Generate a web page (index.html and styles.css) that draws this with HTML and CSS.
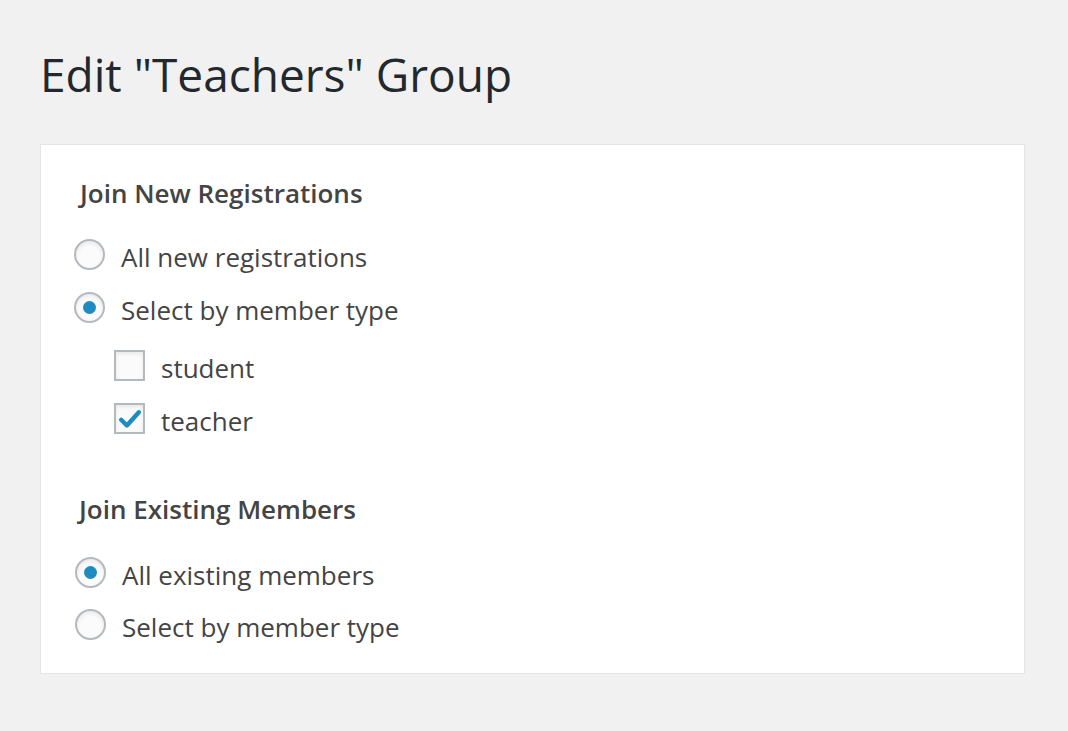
FILE: index.html
```html
<!DOCTYPE html>
<html lang="en">
<head>
<meta charset="utf-8">
<title>Edit "Teachers" Group</title>
<link rel="stylesheet" href="styles.css">
</head>
<body>
<div class="wrap">
  <h1 class="page-title">Edit "Teachers" Group</h1>
  <div class="card">
    <section class="section">
      <h2 class="section-title">Join New Registrations</h2>
      <div class="options">
        <label class="option"><span class="radio"></span><span class="label-text">All new registrations</span></label>
        <label class="option"><span class="radio checked"></span><span class="label-text">Select by member type</span></label>
        <div class="sub-options">
          <label class="option"><span class="checkbox"></span><span class="label-text">student</span></label>
          <label class="option"><span class="checkbox checked"><svg viewBox="0 0 20 20" width="26" height="26"><path d="M3.2 10.6 L7.6 15 L16.8 4.8" fill="none" stroke="#1e8cbe" stroke-width="3.4" stroke-linecap="round" stroke-linejoin="round"/></svg></span><span class="label-text">teacher</span></label>
        </div>
      </div>
    </section>
    <section class="section section-second">
      <h2 class="section-title">Join Existing Members</h2>
      <div class="options">
        <label class="option"><span class="radio checked"></span><span class="label-text">All existing members</span></label>
        <label class="option"><span class="radio"></span><span class="label-text">Select by member type</span></label>
      </div>
    </section>
  </div>
</div>
</body>
</html>
```
FILE: styles.css
```css
html, body {
  margin: 0;
  padding: 0;
  background: #f1f1f1;
}
body {
  font-family: "Open Sans", "Noto Sans", sans-serif;
  color: #444;
}
.wrap {
  padding: 0 43px 0 40px;
}
.page-title {
  margin: 0;
  padding-top: 42px;
  font-size: 46px;
  font-weight: 400;
  line-height: 64px;
  color: #23282d;
}
.card {
  margin-top: 38px;
  background: #fff;
  border: 1px solid #e5e5e5;
  box-shadow: 0 1px 1px rgba(0,0,0,0.04);
  padding: 26px 35px 32px 33px;
}
.section-title {
  margin: 0 0 0 6px;
  font-size: 26px;
  font-weight: 600;
  line-height: 44px;
  color: #444;
}
.options {
  margin-top: 23px;
  display: flex;
  flex-direction: column;
  gap: 20px;
}
.option {
  display: flex;
  align-items: center;
  gap: 16px;
  height: 33px;
  font-size: 26px;
}
.label-text {
  line-height: 33px;
  padding-top: 5px;
}
.radio {
  width: 27px;
  height: 27px;
  border: 2px solid #b4b9be;
  border-radius: 50%;
  background: #fbfbfb;
  box-shadow: inset 0 2px 4px rgba(0,0,0,0.08);
  display: flex;
  align-items: center;
  justify-content: center;
  flex: none;
}
.radio.checked::after {
  content: "";
  width: 13px;
  height: 13px;
  border-radius: 50%;
  background: #1e8cbe;
}
.sub-options {
  margin: 5px 0 0 40px;
  display: flex;
  flex-direction: column;
  gap: 20px;
}
.checkbox {
  width: 27px;
  height: 27px;
  border: 2px solid #b4b9be;
  background: #fbfbfb;
  box-shadow: inset 0 2px 4px rgba(0,0,0,0.08);
  display: flex;
  align-items: center;
  justify-content: center;
  flex: none;
}
.section-second {
  margin-top: 52px;
}
.section-second .section-title {
  margin-left: 5px;
}
.section-second .options {
  margin-top: 25px;
  gap: 19px;
}
.section-second .option {
  padding-left: 1px;
}
```
